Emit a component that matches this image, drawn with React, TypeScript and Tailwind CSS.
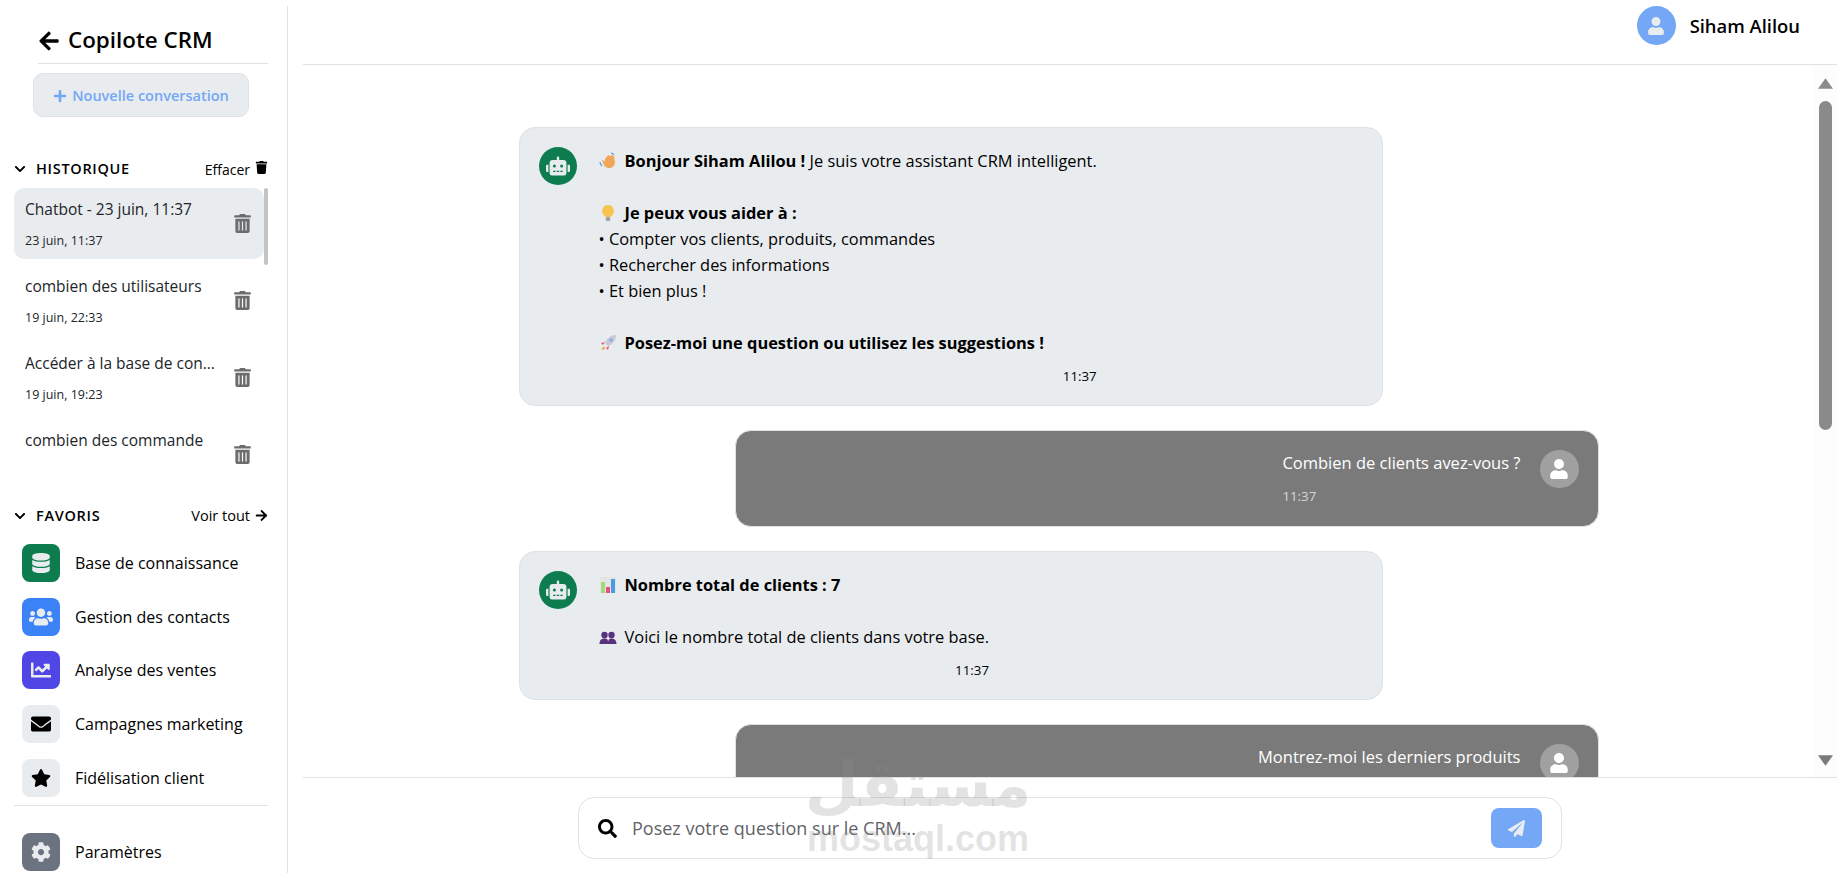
import {
  FaArrowLeft,
  FaArrowRight,
  FaChartLine,
  FaChevronDown,
  FaCog,
  FaDatabase,
  FaEnvelope,
  FaPaperPlane,
  FaPlus,
  FaRobot,
  FaSearch,
  FaStar,
  FaTrash,
  FaTrashAlt,
  FaUser,
  FaUsers,
} from "react-icons/fa";

const history = [
  { title: "Chatbot - 23 juin, 11:37", date: "23 juin, 11:37", active: true },
  { title: "combien des utilisateurs", date: "19 juin, 22:33" },
  { title: "Accéder à la base de connaissance", date: "19 juin, 19:23" },
  { title: "combien des commande", date: "19 juin, 18:02" },
];

const favorites = [
  { label: "Base de connaissance", Icon: FaDatabase, box: "bg-[#0d7d50] text-[#e9ecef]", size: "text-[20px]" },
  { label: "Gestion des contacts", Icon: FaUsers, box: "bg-[#3b82f6] text-[#e9ecef]", size: "text-[24px]" },
  { label: "Analyse des ventes", Icon: FaChartLine, box: "bg-[#4f46e5] text-[#e9ecef]", size: "text-[20px]" },
  { label: "Campagnes marketing", Icon: FaEnvelope, box: "bg-[#e9ecef] text-black", size: "text-[20px]" },
  { label: "Fidélisation client", Icon: FaStar, box: "bg-[#e9ecef] text-black", size: "text-[20px]" },
];

const WaveEmoji = () => (
  <svg viewBox="0 0 18 18" className="w-[18px] h-[18px] shrink-0">
    <path d="M6 7l3-4 2 1 2-1 2 1 1 6c0 4-3 6-6 6s-5-2-6-5L3 8l3 1z" fill="#f2a65a" />
    <path d="M1 10c0 2 1 3 2 4M12 1c1 0 2 .5 3 2" stroke="#5b9bd5" strokeWidth="1.2" fill="none" />
  </svg>
);

const BulbEmoji = () => (
  <svg viewBox="0 0 18 18" className="w-[18px] h-[18px] shrink-0">
    <path d="M9 1a6 6 0 0 0-3.5 10.8L6.5 13h5l1-1.2A6 6 0 0 0 9 1z" fill="#f6c453" />
    <rect x="6.800" y="13" width="4.400" height="4" rx="1" fill="#a3a3a3" />
  </svg>
);

const RocketEmoji = () => (
  <svg viewBox="0 0 18 18" className="w-[18px] h-[18px] shrink-0">
    <path d="M17 1c-5 0-9 3-11 8l3 3c5-2 8-6 8-11z" fill="#c9c7d6" />
    <path d="M6 8L2 9l2 2zM10 12l-1 4-2-2z" fill="#ec4c8a" />
    <circle cx="12" cy="6" r="1.600" fill="#7aa7e8" />
    <path d="M5 12l-3 4 4-1z" fill="#f4a340" />
  </svg>
);

const ChartEmoji = () => (
  <svg viewBox="0 0 18 18" className="w-[18px] h-[18px] shrink-0">
    <rect x="1" y="1" width="16" height="16" fill="#e4e4e4" />
    <rect x="2" y="6" width="4" height="11" fill="#a3d977" />
    <rect x="7" y="11" width="4" height="6" fill="#ea4c7d" />
    <rect x="12" y="3" width="4" height="14" fill="#4a9be8" />
  </svg>
);

const UsersEmoji = () => (
  <svg viewBox="0 0 18 18" className="w-[18px] h-[18px] shrink-0" fill="#58317f">
    <circle cx="5.500" cy="7" r="3.200" />
    <circle cx="12.500" cy="7" r="3.200" />
    <path d="M0.500 16c0-4 2-5.500 5-5.500s4 1.500 3.500 5.500zM9 16c0-4 1-5.500 3.500-5.500s5 1.500 5 5.500z" />
  </svg>
);

const BotAvatar = () => (
  <div className="w-[38px] h-[38px] rounded-full bg-[#0d7d50] text-[#e9ecef] flex items-center justify-center shrink-0">
    <FaRobot className="text-[24px]" />
  </div>
);

const UserAvatar = () => (
  <div className="w-[39px] h-[38px] rounded-full bg-[#a0a0a0] text-white flex items-center justify-center shrink-0">
    <FaUser className="text-[20px]" />
  </div>
);

const Sidebar = () => (
  <aside className="w-[288px] shrink-0 mt-[6px] border-r border-[#dee2e6] flex flex-col pl-[14px] pr-[19px]">
    <div className="ml-[24px] h-[58px] border-b border-[#dee2e6] flex items-center gap-[8px] pt-[12px]">
      <FaArrowLeft className="text-[22px] text-black" />
      <span className="text-[22.400px] font-semibold text-black leading-none">Copilote CRM</span>
    </div>
    <button className="ml-[19px] mt-[9px] w-[216px] h-[44px] rounded-[10px] border border-[#dee2e6] bg-[#e9ecef] text-[#74a7f5] text-[14.500px] font-semibold flex items-center justify-center gap-[5px] pt-[1px]">
      <FaPlus className="text-[14px]" />
      Nouvelle conversation
    </button>

    <div className="mt-[42px] h-[20px] flex items-center justify-between">
      <div className="flex items-center gap-[10px]">
        <FaChevronDown className="text-[12px]" />
        <span className="text-[14.500px] font-semibold tracking-[0.7px] text-black">HISTORIQUE</span>
      </div>
      <div className="flex items-center gap-[5px] text-[14px] text-black">
        Effacer
        <FaTrash className="text-[13px] -mt-[3px]" />
      </div>
    </div>

    <div className="mt-[9px] h-[277px] flex overflow-hidden">
      <div className="w-[250px] flex flex-col gap-[6px] shrink-0">
        {history.map((item) => (
          <div
            key={item.title}
            className={`h-[71px] shrink-0 rounded-[10px] pl-[11px] pr-[12px] flex items-center justify-between ${item.active ? "bg-[#e9ecef]" : ""}`}
          >
            <div className="w-[196px] text-[#212529]">
              <div className="text-[15.500px] leading-[20px] truncate">{item.title}</div>
              <div className="text-[12.500px] leading-[16px] mt-[14px]">{item.date}</div>
            </div>
            <FaTrashAlt className="text-[#6c6c6c] text-[19px] shrink-0" />
          </div>
        ))}
      </div>
      <div className="w-[4px] h-[77px] rounded-full bg-[#c4c4c4] shrink-0" />
    </div>

    <div className="mt-[41px] h-[20px] flex items-center justify-between">
      <div className="flex items-center gap-[10px]">
        <FaChevronDown className="text-[12px]" />
        <span className="text-[14.500px] font-semibold tracking-[0.7px] text-black">FAVORIS</span>
      </div>
      <div className="flex items-center gap-[5px] text-[14.500px] text-black">
        Voir tout
        <FaArrowRight className="text-[13px] -mt-[2px]" />
      </div>
    </div>

    <div className="mt-[18px] flex flex-col gap-[15.700px]">
      {favorites.map(({ label, Icon, box, size }) => (
        <div key={label} className="flex items-center gap-[15px] pl-[8px]">
          <div className={`w-[38px] h-[38px] rounded-[8px] flex items-center justify-center ${box}`}>
            <Icon className={size} />
          </div>
          <span className="text-[16px] text-black">{label}</span>
        </div>
      ))}
    </div>

    <div className="mt-[8px] border-t border-[#dee2e6] pt-[27px] flex items-center gap-[15px] pl-[8px]">
      <div className="w-[38px] h-[38px] rounded-[8px] bg-[#6b7280] text-[#e9ecef] flex items-center justify-center">
        <FaCog className="text-[20px]" />
      </div>
      <span className="text-[16px] text-black">Paramètres</span>
    </div>
  </aside>
);

const BotMessage = ({ children, time }: { children: React.ReactNode; time: string }) => (
  <div className="w-[864px] self-start shrink-0 rounded-[16px] border border-[#dee2e6] bg-[#e9ecef] pl-[19px] pr-[20px] pt-[20px] pb-[21px] flex gap-[22px]">
    <div className="-mt-[1px]">
      <BotAvatar />
    </div>
    <div>
      <div className="text-[16.400px] leading-[26px] text-black">{children}</div>
      <div className="text-[13.300px] leading-[16px] mt-[12px] text-right text-black">{time}</div>
    </div>
  </div>
);

const UserMessage = ({ text, time }: { text: string; time: string }) => (
  <div className="w-[864px] self-end shrink-0 rounded-[16px] border border-[#dee2e6] bg-[#7a7a7a] pl-[19px] pr-[19px] pt-[19px] pb-[22px] flex justify-end gap-[19px]">
    <div>
      <div className="text-[16.500px] leading-[26px] text-white">{text}</div>
      <div className="text-[13.300px] leading-[16px] mt-[12px] text-white/70">{time}</div>
    </div>
    <UserAvatar />
  </div>
);

const Line = ({ icon, children }: { icon: React.ReactNode; children: React.ReactNode }) => (
  <div className="flex items-center gap-[8px]">
    {icon}
    <span>{children}</span>
  </div>
);

const Scrollbar = () => (
  <div className="w-[23px] shrink-0 flex flex-col items-center pt-[13px] pb-[11px] bg-[#fdfdfd]">
    <svg viewBox="0 0 14 10" className="w-[15px] h-[11px] fill-[#8a8a8a]">
      <path d="M7 0l7 10H0z" />
    </svg>
    <div className="w-[13px] h-[329px] mt-[12px] rounded-full bg-[#8a8a8a]" />
    <svg viewBox="0 0 14 10" className="w-[15px] h-[11px] fill-[#7a7a7a] mt-auto">
      <path d="M7 10L14 0H0z" />
    </svg>
  </div>
);

const Watermark = () => (
  <div className="absolute left-[803px] top-[742px] w-[230px] flex flex-col items-center pointer-events-none text-[#8f8f8f]/25 leading-none">
    <span className="text-[62px] font-bold font-['DejaVu_Sans',sans-serif] leading-[86px]" dir="rtl">
      مستقل
    </span>
    <span className="text-[36px] font-bold -mt-[7px] font-['Liberation_Sans',sans-serif]">mostaql.com</span>
  </div>
);

export default function App() {
  return (
    <div className="relative h-[873px] w-full flex overflow-hidden bg-white font-['Open_Sans',sans-serif] text-black">
      <Sidebar />
      <main className="flex-1 min-w-0 flex flex-col pl-[15px]">
        <header className="h-[65px] shrink-0 border-b border-[#dee2e6] flex items-center justify-end pr-[37px] gap-[14px] pb-[13px]">
          <div className="w-[39px] h-[39px] rounded-full bg-[#74a7f5] text-[#e9ecef] flex items-center justify-center">
            <FaUser className="text-[18px]" />
          </div>
          <span className="text-[18.400px] font-semibold text-black">Siham Alilou</span>
        </header>

        <div className="flex-1 min-h-0 flex border-b border-[#dee2e6]">
          <div className="flex-1 min-w-0 overflow-hidden">
            <div className="w-[1080px] mx-auto pt-[62px] flex flex-col gap-[24px]">
              <BotMessage time="11:37">
                <Line icon={<WaveEmoji />}>
                  <b className="font-bold">Bonjour Siham Alilou !</b> Je suis votre assistant CRM intelligent.
                </Line>
                <div className="h-[26px]" />
                <Line icon={<BulbEmoji />}>
                  <b className="font-bold">Je peux vous aider à :</b>
                </Line>
                <div>• Compter vos clients, produits, commandes</div>
                <div>• Rechercher des informations</div>
                <div>• Et bien plus !</div>
                <div className="h-[26px]" />
                <Line icon={<RocketEmoji />}>
                  <b className="font-bold">Posez-moi une question ou utilisez les suggestions !</b>
                </Line>
              </BotMessage>
              <UserMessage text="Combien de clients avez-vous ?" time="11:37" />
              <BotMessage time="11:37">
                <Line icon={<ChartEmoji />}>
                  <b className="font-bold">Nombre total de clients : 7</b>
                </Line>
                <div className="h-[26px]" />
                <Line icon={<UsersEmoji />}>Voici le nombre total de clients dans votre base.</Line>
              </BotMessage>
              <UserMessage text="Montrez-moi les derniers produits" time="11:37" />
            </div>
          </div>
          <Scrollbar />
        </div>

        <div className="h-[95px] shrink-0 pl-[275px] pr-[275px] pt-[19px]">
          <div className="h-[62px] rounded-[16px] border border-[#dee2e6] bg-white flex items-center pl-[19px] pr-[19px]">
            <FaSearch className="text-[19px] text-black shrink-0" />
            <span className="ml-[15px] text-[18px] text-[#5f6368]">Posez votre question sur le CRM...</span>
            <button className="ml-auto w-[51px] h-[40px] rounded-[8px] bg-[#74a7f5] text-[#e9ecef] flex items-center justify-center">
              <FaPaperPlane className="text-[17px]" />
            </button>
          </div>
        </div>
      </main>
      <Watermark />
    </div>
  );
}
